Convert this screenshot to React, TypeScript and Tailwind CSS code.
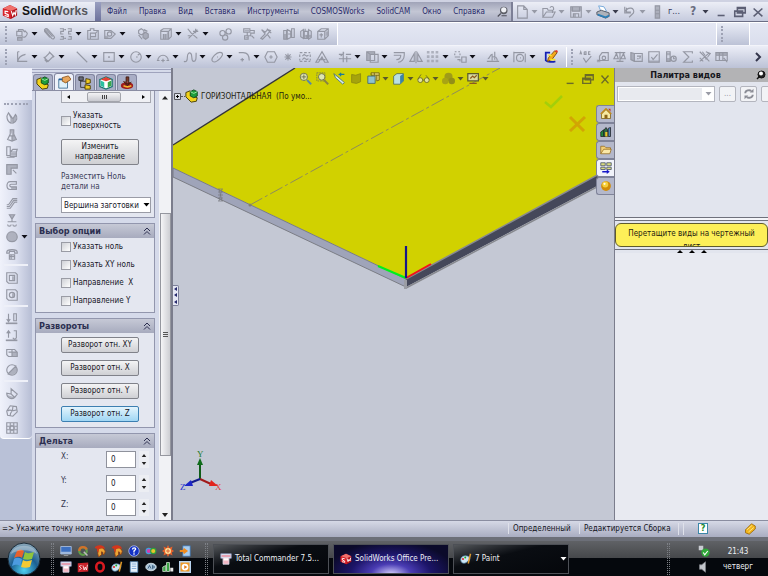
import type { ReactNode } from 'react'
import clsx from 'clsx'

type IconDef = { d: string; fill?: string; caret?: boolean; dark?: boolean }
type Tool = IconDef | 'sep'

// 16x16 line drawings: d is stroked, fill is painted
const assemblyTools: Tool[] = [
    { d: 'M2 5h6v5H2zM4 5V3h5l2 3M8 11c3 2 6-1 6-4l-3-3M3 12h5v3H3z', fill: 'M3 11h5v3H3z', caret: true },
    { d: 'M3 3l8 10c2 2 4-1 3-2L7 3C5 1 2 2 3 5l6 7M5 3l7 8' },
    { d: 'M1 2h4v3H2v3h3M1 14h4v-3H2M10 2h4v3h-3v3h3M10 14h4v-3h-3M6 3h2M6 13h2', caret: true },
    { d: 'M2 4h3V2h4v2h5v10H2zM5 7h6v4H5zM5 14v-3M11 7l2-2' },
    { d: 'M2 4h7l5 4-5 5H2zM5 8a2.5 2.5 0 105 0 2.5 2.5 0 10-5 0', fill: 'M2 10h4v3H2z', caret: true },
    'sep',
    { d: 'M3 4l3-2 3 2v3L6 9 3 7zM8 8l3-2 3 2v4l-3 2-3-2zM3 9l4 5M9 3l4 2', fill: 'M8 8l3-2 3 2v4l-3 2-3-2z' },
    'sep',
    { d: 'M2 4l3-2h9v9l-3 3H2zM2 5h9v9M11 5l3-3M5 8v6M8 8v6', fill: 'M5 8h3v6H5zM9 6h2v8H9z', caret: true },
    { d: 'M2 2l4 5 7 6M13 3L3 13M11 2v5M8 5h6M2 10h3', caret: true },
    'sep',
    { d: 'M1 7a3 3 0 106 0 3 3 0 10-6 0M8 5a3 3 0 106 0 3 3 0 10-6 0M4 12a3 3 0 106 0 3 3 0 10-6 0' },
    'sep',
    { d: 'M2 2h7v4H2zM9 4h5v3h-4v3H7v4H3v-4h3V6M11 10l3 3', fill: 'M3 3h5v2H3zM4 11h3v2H4z' },
    { d: 'M3 3l4 3 3-3 3 1-4 5-5 5-2-1 5-5zM10 9l3 4M9 2l5 5' },
    'sep',
    { d: 'M2 4h3v10H2zM6 3l4 2v7l-4 2zM11 2h3v10h-3zM7 8h3', fill: 'M2 8h3v6H2z' },
    { d: 'M2 5l3-2v10l-3-2zM6 5h4v8H6zM11 3l3 2v7l-3 2zM7 2v3M9 9v4', fill: 'M6 9h8v3H6z' },
    { d: 'M2 5l4-3h8v8l-4 4H2zM2 5h8v9M10 5l4-3M4 9h4M6 7v5', fill: 'M11 5h3v5h-3z' },
]

const sketchTools: Tool[] = [
    { d: 'M3 2v11h11M3 13c1-5 4-7 9-8M3 2h2', caret: true },
    { d: 'M3 9l6-6 4 4-6 6zM2 8l2 2M8 2l6 6M3 11l3 3', caret: true },
    'sep',
    { d: 'M2 2l12 12', caret: true },
    { d: 'M2 3h12v10H2zM7 8h2M8 7v2', caret: true },
    { d: 'M2 8a6 6 0 1012 0 6 6 0 10-12 0M8 8h2M10 6l2-2', caret: true },
    { d: 'M2 12a6 6 0 1112 0M1 12h3M12 12h3M8 10v4M6 12h4', caret: true },
    { d: 'M1 13c3 1 4-1 4-5s2-6 4-4 0 9 3 9 3-3 3-10', caret: true },
    { d: 'M3 13C0 10 8 1 13 3s-6 13-10 10M8 8h1', caret: true },
    { d: 'M2 3h5c5 0 7 3 7 9M6 9v4M4 11h4', caret: true },
    { d: 'M1 8l3-6h8l3 6-3 6H4zM6 8h4M8 6v4' },
    { d: 'M8 4v8M4 8h8M5 5l6 6M11 5l-6 6' },
    { d: 'M2 3h3M7 3h3M12 3h2M2 13h3M7 13h3M12 13h2M2 5v3M2 10v2M14 5v3M14 10v2M5 7l2-2 3 2 2-1M5 11l2-2 3 2 2-1' },
    { d: 'M1 14L8 2l7 12h-4L8 8l-4 6zM4 11h8' },
    'sep',
    { d: 'M1 5h5M9 5h6M1 10h14M6 2v12M10 7v7M3 7l4-4', caret: true },
    { d: 'M2 2h9v10H2zM6 5h9v9H6zM2 2l4 3', fill: 'M2 2h9v3H6v7H2z', caret: true },
    { d: 'M2 3h12v3c0 4-3 8-7 8M2 6h8c0 3-2 5-5 5' },
    { d: 'M8 1v14M6 4l-5 9h5zM10 4l5 9h-5z' },
    { d: '', fill: 'M1 1h3v3H1zM6 1h3v3H6zM11 1h3v3h-3zM1 6h3v3H1zM6 6h3v3H6zM11 6h3v3h-3zM1 11h3v3H1zM6 11h3v3H6zM11 11h3v3h-3z', caret: true },
    { d: 'M2 2h2M6 2h2M2 4v2M8 4v2M2 8h6M5 11h3v2M10 8h5v6h-5z', caret: true },
    'sep',
    { d: 'M1 13h14M2 10c3 0 2-5 5-5v7M10 2v9M7 8c4-1 5 0 6 4', caret: true },
    { d: 'M1 3h12M1 2v12M4 9a4 4 0 108 0 4 4 0 10-8 0M8 9h1M14 4v10', caret: true },
]

const checkTools: IconDef[] = [
    { d: 'M1 5l1-3 1 3M6 2v3h2V2H6M13 2h-2v3h2M5 9l3 5 6-7' },
    { d: 'M4 12V7l3-4h7v9H2M7 9a2 2 0 104 0 2 2 0 10-4 0', fill: 'M1 11h4v3H1z' },
    { d: 'M2 3h12M8 2v11M4 13h8M4 4l-3 6h5zM12 4l-3 6h5z' },
    { d: 'M1 3l4 1h9v9H5l-4-2zM5 4v9M8 7h4l-1 3M8 10h2', fill: 'M1 3l4 1v9l-4-2z' },
    { d: 'M2 2h12v12H2zM5 8l2 3 5-6', fill: 'M2 12h12v2H2z' },
    { d: 'M3 2h4v11H3zM8 10a3 3 0 106 0 3 3 0 10-6 0M11 8v2h2', fill: 'M3 3h4v3H3zM3 9h4v4H3z' },
    { d: 'M13 4V2H3l6 6-6 6h10v-2' },
    { d: 'M2 2l11 11M2 13L13 3M5 2l3 4M9 2l5 2-3 4M2 9l4 4', fill: 'M8 8h3v3H8z' },
    { d: 'M1 3h13v9H1zM1 6h13M5 3v9M9 3v9M10 9l4 5', fill: 'M1 3h13v3H1z' },
]

const featureTools: Tool[] = [
    { d: 'M4 2c-3 4-2 10 3 12V8zM9 14c5-2 6-7 3-10L9 9zM4 2l5 7', fill: 'M9 9l3-5c2 4 1 8-3 10z' },
    { d: 'M6 2h4v5l3 6-5 2-5-2 3-6zM5 9h6M8 9v5', fill: 'M6 2h4v5l3 6-5 2V8z' },
    { d: 'M2 2h4v10H2zM6 8h7v5H6zM6 8l3-3h5l-1 3M2 14h9', fill: 'M6 9h7v3H6z' },
    { d: 'M2 14V3h12v4H7v7zM9 9l4 4', fill: 'M2 3h12v4H7v7H2z' },
    { d: 'M13 3H6C1 3 1 12 6 12h7V9H7C5 9 5 6 7 6h6z', fill: 'M7 9h6v3H7z' },
    { d: 'M2 12h3l5-7h4M2 14h4l5-7h3M2 10h2l5-7h5' },
    { d: 'M5 2h6l-3 5zM8 7v3M3 10h10M3 13a2 2 0 104 0M9 13a2 2 0 104 0', fill: 'M5 2h6l-3 5z' },
    { d: 'M2 8c0-8 12-8 12 0 0 7-12 7-12 0', fill: 'M2 8c0-8 12-8 12 0 0 7-12 7-12 0', caret: true },
    { d: 'M2 6c0-4 12-4 12 0v1h-3V5H5v2H2zM5 9h6v5H5zM7 9v5M5 11h6' },
    'sep',
    { d: 'M2 2h10l2 2v10H4l-2-2zM5 5h6v6H5z', fill: 'M8 6h3v5H8z' },
    { d: 'M2 2h10l2 2v10H4l-2-2zM5 8a3 3 0 106 0 3 3 0 10-6 0', fill: 'M8 6h3v5H8z' },
    'sep',
    { d: 'M4 2v8M2 8l2 3 2-3M10 2h3v8h-3zM1 13h13', fill: 'M1 12h13v2H1z' },
    { d: 'M4 10V2M2 5l2-3 2 3M10 2h3v8c-1 2-3 2-4 0M1 13h13', fill: 'M1 12h13v2H1z' },
    { d: 'M2 4h9l3 3v5H4l-2-2zM4 7h10M8 4v8', fill: 'M8 7h6v5H8z' },
    { d: 'M2 8a6 6 0 1012 0 6 6 0 10-12 0M3 13L13 3', fill: 'M3 12L12 3c6 6-4 14-9 9z' },
    'sep',
    { d: 'M7 2v6L2 7c0 5 5 8 9 5l3-4zM7 8l4 4', fill: 'M3 9l8 3c-4 2-7 1-8-3z' },
    { d: 'M2 8l4-6 7 1 1 6-5 5-6-1zM3 8c3-3 6 2 11-2M6 13c0-5 3-2 3-10' },
    { d: 'M2 2h12v12H2zM2 6h12M2 10h12M6 2v12M10 2v12M8 5l3 3-3 3-3-3z' },
]

function Glyph({ icon, className = 'size-3.5' }: { icon: IconDef; className?: string }) {
    return (
        <svg viewBox="0 0 16 16" className={clsx(className, 'shrink-0', icon.dark ? 'text-[#5c5f74]' : 'text-[#9497a3]')} aria-hidden="true">
            {icon.fill && <path d={icon.fill} fill="currentColor" opacity=".65" />}
            <path d={icon.d} fill="none" stroke="currentColor" strokeWidth={icon.dark ? 1.8 : 1.3} />
        </svg>
    )
}

function Caret({ className = 'text-[#101018]' }: { className?: string }) {
    return (
        <svg viewBox="0 0 10 6" className={clsx('h-1.5 w-2.5 shrink-0', className)} aria-hidden="true">
            <path d="M2.500 1h6L5.500 4.500z" fill="currentColor" />
        </svg>
    )
}

function ToolRow({ tools }: { tools: Tool[] }) {
    return (
        <div className="flex items-center">
            {tools.map((t, i) =>
                t === 'sep' ? (
                    <span key={i} className="w-1.5" />
                ) : (
                    <button key={i} className="mr-[3px] flex items-center">
                        <Glyph icon={t} />
                        {t.caret && <Caret />}
                    </button>
                ),
            )}
        </div>
    )
}

function Grip() {
    return <span className="h-4 border-l-2 border-dotted border-[#9ea2b4]" />
}

function SwCube({ className }: { className: string }) {
    return (
        <svg viewBox="0 0 18 18" className={className} aria-hidden="true">
            <path d="M1 5l8-4 8 4v8l-7 4-9-4z" fill="#b3121b" />
            <path d="M1 5l8-4 8 4-7 3z" fill="#f0706c" />
            <path d="M1 5l9 3v9l-9-4z" fill="#d9232b" />
            <path d="M7 8.500L3.500 8v2.500L7 12v2l-4-1M10.500 8l1.500 5 1.500-3.500L15 12l1-5" fill="none" stroke="#fff" strokeWidth="1.300" />
        </svg>
    )
}

const menus = ['Файл', 'Правка', 'Вид', 'Вставка', 'Инструменты', 'COSMOSWorks', 'SolidCAM', 'Окно', 'Справка']

function TitleBar() {
    return (
        <header className="flex h-[22px] shrink-0 items-stretch border-t-2 border-b border-t-[#cfd2e2] border-b-[#6b6e85] bg-linear-to-b from-[#eceef6] to-[#c6cbde]">
            <div className="flex w-[95px] items-center gap-1 pl-0.5">
                <SwCube className="size-4" />
                <span className="font-[Liberation_Sans,sans-serif] text-[12px] font-bold text-[#141414]">
                    Solid<span className="text-[#55565c]">Works</span>
                </span>
            </div>
            <span className="w-1.5 bg-linear-to-b from-[#9a9fc0] to-[#6d729c]" />
            <nav className="flex flex-1 items-center justify-between bg-linear-to-b from-[#a0a4b8] via-[#c3c6d4] to-[#a9adc1] pr-0.5 pl-1.5 text-[#28296a]">
                {menus.map(m => (
                    <button key={m} className="whitespace-nowrap">{m}</button>
                ))}
                <svg viewBox="0 0 16 16" className="size-3" aria-hidden="true">
                    <circle cx="9" cy="6" r="5" fill="#5c5e66" />
                    <circle cx="9" cy="5" r="3.500" fill="#eef0f4" />
                    <path d="M5 10l-4 4M6 13h7" stroke="#4c4d58" strokeWidth="1.500" />
                </svg>
            </nav>
            <div className="flex w-[257px] items-center border-l-2 border-[#7c7f96] pl-0.5">
                {[
                    { d: 'M3 1h7l4 4v10H3zM10 1v4h4' },
                    { d: 'M1 14V4h5l1 2h5v3M1 14l4-6h10l-3 6zM9 3c3-3 5 0 4 3' },
                    { d: 'M2 2h12v12H2zM4 2v5h8V2M5 14v-4h6v4', fill: 'M2 2h12v5H2zM5 10h3v4H5z' },
                ].map((t, i) => (
                    <button key={i} className="mr-[3px] flex items-center">
                        <Glyph icon={t} />
                        <Caret className="text-[#9699a6]" />
                    </button>
                ))}
                <button className="mr-[3px] flex items-center">
                    <svg viewBox="0 0 16 16" className="size-3.5" aria-hidden="true">
                        <path d="M3 1l6 1 3 5-6 1z" fill="#fff" stroke="#6aa2d8" />
                        <path d="M1 8l5-2 9 3v4l-4 2-10-4z" fill="#aeb2ba" stroke="#50535e" />
                        <path d="M2 11l9 3 4-2" fill="none" stroke="#2c7fb8" strokeWidth="2" />
                    </svg>
                    <Caret className="text-[#3a3c4c]" />
                </button>
                <button className="mr-[3px] flex items-center">
                    <Glyph icon={{ d: 'M2 2v7h7M2 8c4-7 12-5 10 1l-5 5M4 3v5h5' }} />
                    <Caret className="text-[#9699a6]" />
                </button>
                <button className="mr-1">
                    <Glyph icon={{ d: 'M6 1h5v14H6zM6 6h5M6 10h5', fill: 'M6 1h5v14H6z' }} />
                </button>
                <span className="text-[9px] text-[#33355e]">г...</span>
                <button className="ml-2.5 flex items-center gap-1 text-[12px] font-bold text-[#6a6d80]">
                    ?<Caret className="text-[#3a3c4c]" />
                </button>
                <div className="ml-auto flex gap-1 pr-[3px]">
                    {['M3 12h8', 'M5 3h9v6H5zM2 7h9v6H2zM5 4h9', 'M3 4l10 9M13 4L3 13'].map(d => (
                        <button key={d}><Glyph icon={{ d, dark: true }} /></button>
                    ))}
                </div>
            </div>
        </header>
    )
}

function Toolbars() {
    return (
        <>
            <div className="flex h-6 shrink-0 items-stretch border-t border-b border-t-white border-b-[#f3f4fa] bg-linear-to-b from-[#e4e7f3] to-[#dadeed]">
                <div className="flex w-[338px] items-center gap-2 border-r border-white bg-linear-to-b from-[#e9ecf6] to-[#bcc2d6] pl-[5px]">
                    <Grip />
                    <ToolRow tools={assemblyTools} />
                </div>
                <div className="flex-1" />
                <div className="flex w-[34px] items-center border-x border-white bg-linear-to-b from-[#e9ecf6] to-[#bcc2d6] pl-1">
                    <Grip />
                </div>
                <div className="w-[18px]" />
            </div>
            <div className="flex h-[22px] shrink-0 items-center bg-linear-to-b from-[#eceef7] to-[#bcc2d6] pl-[5px]">
                <Grip />
                <div className="w-2" />
                <ToolRow tools={sketchTools} />
                <button className="mx-1">
                    <svg viewBox="0 0 16 16" className="size-3.5" aria-hidden="true">
                        <path d="M7 3H2v9c2 2 8 2 11 1" fill="none" stroke="#1420b4" strokeWidth="2" />
                        <path d="M5 9l7-8 3 2-6 8-5 2z" fill="#f4a81c" stroke="#7c4a08" />
                        <path d="M12 1l3 2 1-2-2-1z" fill="#e43d2a" />
                        <path d="M5 6h4M7 11h6" stroke="#f5e12e" strokeWidth="2" />
                    </svg>
                </button>
                <span className="mr-1 ml-1 h-5 border-l border-white" />
                <Grip />
                <div className="w-1.5" />
                <ToolRow tools={checkTools} />
                <svg viewBox="0 0 8 10" className="mr-1.5 ml-auto h-2.5 w-2" aria-hidden="true">
                    <path d="M2 1l4 4-4 4" fill="none" stroke="#34364c" strokeWidth="2" />
                </svg>
            </div>
        </>
    )
}

function FeatureBar() {
    return (
        <div className="flex w-8 shrink-0 flex-col bg-[#b9c1d7]">
            <div className="h-8 shrink-0 bg-[#eef0fa]" />
            <div className="rounded-b-sm border-b border-white bg-linear-to-r from-[#f0f2fb] via-[#dce0ef] to-[#b6bdd4] pt-[3px]">
                <div className="mx-1 mb-1.5 border-t-2 border-dotted border-[#9ea2b4]" />
                {featureTools.map((t, i) =>
                    t === 'sep' ? (
                        <div key={i} className="mx-1 mb-[5px] border-t-2 border-[#eef0f8]" />
                    ) : (
                        <button key={i} className="mb-[3px] flex h-3.5 items-center pl-[5px]">
                            <Glyph icon={t} />
                            {t.caret && <Caret />}
                        </button>
                    ),
                )}
            </div>
        </div>
    )
}

const tabIcons: ReactNode[] = [
    <>
        <path d="M1 4l5-2 2 6 6 2-1 4-6 1-6-6z" fill="#f2d21c" stroke="#3d3500" />
        <path d="M6 3l4-2 4 2v5l-4 2-4-2z" fill="#1f9d3c" stroke="#0b4518" />
        <path d="M6 3l4 2 4-2" fill="none" stroke="#a7ecae" />
    </>,
    <>
        <path d="M2 5h10v10H2z" fill="#dff1fb" stroke="#3f6e93" />
        <path d="M6 3l7-2 3 4-6 4-4-2z" fill="#e7a55c" stroke="#8f5518" />
        <path d="M2 5h4" stroke="#2060a0" strokeWidth="2" />
    </>,
    <>
        <path d="M3 3v10h6M3 6h6" fill="none" stroke="#333" />
        <path d="M1 1h5v4H1z" fill="#6a6d7c" stroke="#2b2b2b" />
        <path d="M9 3l5 1v4l-5 1zM8 10l6 1v4H8z" fill="#f0cb22" stroke="#4b3b00" />
    </>,
    <>
        <path d="M1 4l7-3 7 3v8l-7 3-7-3z" fill="#fff" stroke="#19746f" strokeWidth="1.500" />
        <path d="M2 4l6-3 6 3-6 2z" fill="#e44133" />
        <path d="M2 5l4 2v6l-4-2z" fill="#2bbf9f" />
        <path d="M10 7l4-2v6l-4 2z" fill="#3aa84a" />
    </>,
    <>
        <path d="M1 11c0-5 14-5 14 0s-14 5-14 0" fill="#a01d1d" />
        <path d="M7 1h3v8H7zM4 6l4 5 5-4" fill="#7a3a28" stroke="#3e1a10" />
        <path d="M4 11c3 2 6 2 9 0" fill="none" stroke="#f2b632" strokeWidth="2" />
    </>,
]

function Group({ title, children }: { title: string; children: ReactNode }) {
    return (
        <section className="mb-[5px] border border-[#9296ad] bg-[#e4e7f0]">
            <h2 className="flex h-[14px] items-center justify-between bg-linear-to-b from-[#c6c9d6] to-[#a7abbe] px-[3px] text-[9px] leading-none font-bold text-[#2c2f50]">
                {title}
                <svg viewBox="0 0 8 8" className="size-2" aria-hidden="true">
                    <path d="M1 4l3-3 3 3M1 7.500l3-3 3 3" fill="none" stroke="#2c2f50" />
                </svg>
            </h2>
            {children}
        </section>
    )
}

function Check({ label, className }: { label: string; className?: string }) {
    return (
        <label className={clsx('flex items-center gap-0.5 leading-[10px]', className)}>
            <input type="checkbox" className="size-2.5 shrink-0 appearance-none border border-[#9a9ca5] bg-linear-to-br from-[#cfd1d6] to-white" />
            <span>{label}</span>
        </label>
    )
}

function PanelButton({ children, active, tall }: { children: ReactNode; active?: boolean; tall?: boolean }) {
    return (
        <button
            className={clsx(
                'block w-[78px] rounded-[2px] border leading-[10px]',
                tall ? 'h-[26px]' : 'h-4',
                active
                    ? 'border-[#3c7fb1] bg-linear-to-b from-[#e3f4fd] to-[#9fd6f4]'
                    : 'border-[#80828a] bg-linear-to-b from-[#f4f4f5] to-[#cfd0d4]',
            )}
        >
            {children}
        </button>
    )
}

function PropertyPanel() {
    return (
        <aside className="flex w-[141px] shrink-0 flex-col border-r-2 border-[#7b7d8c] bg-[#d5daea]">
            <div className="mt-px h-1 shrink-0 border-y border-[#9fa3bd]" />
            <div className="flex h-[18px] shrink-0 items-end gap-px border-b border-[#8a8da3] pl-px">
                {tabIcons.map((icon, i) => (
                    <button
                        key={i}
                        className={clsx(
                            'flex w-5 items-center justify-center rounded-t-[3px] border border-b-0 border-[#8286a0]',
                            i === 1 ? 'h-[17px] bg-[#eef1f9]' : 'h-4 bg-[#a9aec6]',
                        )}
                    >
                        <svg viewBox="0 0 16 16" className="size-3.5" aria-hidden="true">{icon}</svg>
                    </button>
                ))}
            </div>
            <div className="flex min-h-0 flex-1">
                <div className="min-w-0 flex-1 overflow-hidden pr-1 pl-[3px] text-[#15151f]">
                    <section className="mb-[5px] h-[127px] border border-t-0 border-[#9296ad] bg-[#e4e7f0] pr-[3px] pl-[25px]">
                        <div className="flex h-3 items-center justify-between border border-t-0 border-[#a5a7b0] bg-[#eff0f4] px-1">
                            <svg viewBox="0 0 6 6" className="size-1.5"><path d="M4 1v4L1 3z" /></svg>
                            <span className="-ml-1 flex h-2.5 w-[34px] items-center justify-center gap-px rounded-[2px] border border-[#a3a5ac] bg-linear-to-b from-[#f3f3f5] to-[#c9cad0]">
                                <i className="h-1 w-px bg-[#444]" />
                                <i className="h-1 w-px bg-[#444]" />
                                <i className="h-1 w-px bg-[#444]" />
                            </span>
                            <svg viewBox="0 0 6 6" className="size-1.5"><path d="M2 1v4l3-2z" /></svg>
                        </div>
                        <Check label="Указать поверхность" className="mt-2 w-16" />
                        <div className="mt-2">
                            <PanelButton tall>Изменить направление</PanelButton>
                        </div>
                        <label htmlFor="zero-at" className="mt-[7px] block w-[72px] leading-[10px] text-[#3a3d58]">Разместить Ноль детали на</label>
                        <div className="relative mt-[5px]">
                            <select id="zero-at" className="h-4 w-full appearance-none border border-[#9a9ca6] bg-white pl-0.5">
                                <option>Вершина заготовки</option>
                            </select>
                            <Caret className="pointer-events-none absolute top-[5px] right-0 text-black" />
                        </div>
                    </section>
                    <Group title="Выбор опции">
                        <div className="flex h-[74px] flex-col gap-2 pt-1 pl-[25px]">
                            <Check label="Указать ноль" />
                            <Check label="Указать XY ноль" />
                            <Check label="Направление  X" className="whitespace-pre" />
                            <Check label="Направление Y" />
                        </div>
                    </Group>
                    <Group title="Развороты">
                        <div className="flex h-[94px] flex-col gap-[7px] pt-1 pl-[25px]">
                            <PanelButton>Разворот отн. XY</PanelButton>
                            <PanelButton>Разворот отн. X</PanelButton>
                            <PanelButton>Разворот отн. Y</PanelButton>
                            <PanelButton active>Разворот отн. Z</PanelButton>
                        </div>
                    </Group>
                    <Group title="Дельта">
                        <div className="flex flex-col gap-[7px] pt-[3px] pb-3 pl-[25px]">
                            {['X', 'Y', 'Z'].map(axis => (
                                <div key={axis} className="flex items-start">
                                    <label htmlFor={`delta-${axis}`} className="w-[45px] text-[#33364e]">{axis}:</label>
                                    <input id={`delta-${axis}`} defaultValue="0" className="h-[17px] w-[30px] border border-[#8f929c] bg-white px-1" />
                                    <div className="ml-[3px] flex h-[17px] w-2.5 flex-col justify-between bg-[#eceef3] py-[3px]">
                                        <svg viewBox="0 0 6 4" className="mx-auto h-[3px] w-1.5"><path d="M0 4l3-4 3 4z" fill="#222" /></svg>
                                        <svg viewBox="0 0 6 4" className="mx-auto h-[3px] w-1.5"><path d="M0 0l3 4 3-4z" fill="#222" /></svg>
                                    </div>
                                </div>
                            ))}
                        </div>
                    </Group>
                </div>
                <div className="flex w-3 flex-col items-center bg-[#f1f2f5]">
                    <svg viewBox="0 0 6 6" className="mt-1 size-1.5"><path d="M0 4.500L3 1l3 3.500z" fill="#222" /></svg>
                    <div className="mt-28 flex h-[243px] w-[11px] flex-col items-center justify-center gap-px border border-[#95979f] bg-linear-to-r from-[#f5f5f7] to-[#cdced3]">
                        <i className="h-px w-[5px] bg-[#555]" />
                        <i className="h-px w-[5px] bg-[#555]" />
                        <i className="h-px w-[5px] bg-[#555]" />
                    </div>
                    <svg viewBox="0 0 6 6" className="mt-auto mb-0.5 size-1.5"><path d="M0 1l3 4 3-4z" fill="#222" /></svg>
                </div>
            </div>
        </aside>
    )
}

const viewTools: { art: ReactNode; caret?: boolean }[] = [
    { art: <><circle cx="6" cy="6" r="4.500" fill="#dfe6b0" stroke="#60624a" /><path d="M6 3v6M3 6h6" stroke="#60624a" /><path d="M10 10l5 5" stroke="#5687a8" strokeWidth="2.500" /></> },
    { art: <><path d="M1 1h10v10H1z" fill="none" stroke="#777a50" strokeDasharray="2 1" /><circle cx="7" cy="6" r="4" fill="#dfe6b0" stroke="#60624a" /><path d="M10 10l5 5" stroke="#8a8440" strokeWidth="2.500" /></> },
    { art: <><path d="M1 2l5 4 8 7-2 2-9-8z" fill="#d9ecec" stroke="#456e76" /><path d="M14 3H8l2-2M8 3l2 2" fill="none" stroke="#1b7a9c" strokeWidth="1.500" /></> },
    { art: <path d="M2 3l5 1 6-2v10l-5 2-6-1z" fill="#a5a30c" stroke="#8a8810" /> },
    { art: <><path d="M5 1h10v9l-3 1M5 1v3M9 1v3M5 4h10M12 4v7" fill="#e6d66c" stroke="#6b5a10" /><path d="M1 5h9v9H1z" fill="#8fc3cf" stroke="#3e6470" /></>, caret: true },
    { art: <><path d="M2 5l4-3h8v9l-4 4H2z" fill="#b9dfe2" stroke="#4d6b5a" /><path d="M10 5l4-3v9l-4 4z" fill="#3b84a8" /></>, caret: true },
    { art: <><circle cx="4" cy="10" r="3" fill="#e4e49a" stroke="#66662a" /><circle cx="12" cy="10" r="3" fill="#e4e49a" stroke="#66662a" /><path d="M1 9l4-6M15 9l-4-5M7 10h2" stroke="#66662a" /></>, caret: true },
    { art: <><circle cx="8" cy="6" r="5" fill="#9f9b18" /><circle cx="4" cy="11" r="4" fill="#a8a414" /><circle cx="12" cy="11" r="4" fill="#938f18" /></>, caret: true },
    { art: <><path d="M1 2h13v9H1z" fill="#d9dba0" stroke="#5c5c2a" strokeWidth="1.500" /><path d="M4 8l3-3 2 2 3-3M3 14h9" stroke="#8c5a1c" strokeWidth="1.500" fill="none" /></>, caret: true },
]

const paneTabs: ReactNode[] = [
    <><path d="M2 8l6-6 6 6v6H2z" fill="#f7e9a0" stroke="#7a5a10" /><path d="M1 8l7-7 7 7" fill="none" stroke="#c08a1a" strokeWidth="2" /><path d="M6 9h4v5H6z" fill="#8a6418" /><path d="M11 1h3v4z" fill="#c2331c" /></>,
    <><path d="M1 8l4-3v9H1z" fill="#1f8a3c" stroke="#1d1d22" /><path d="M5 6l3-4 2 3v9H5z" fill="#2f6a4a" stroke="#1d1d22" /><path d="M7 8h3v6H7z" fill="#e8c52a" /><path d="M11 3l3-1v12h-3z" fill="#4a86b8" stroke="#1d1d22" /></>,
    <><path d="M1 13V3h5l2 2h6v3" fill="#f4d078" stroke="#946a1c" /><path d="M1 13l4-6h10l-2 6z" fill="#fbe8a8" stroke="#946a1c" /></>,
    <><path d="M1 1h6v4H1zM9 1h6v4H9zM1 7h6v3H1zM9 7h6v3H9z" fill="#d9dd7e" stroke="#3d4866" /><path d="M3 13h7" stroke="#1516c8" strokeWidth="2" /><path d="M9 10l4 3-4 3z" fill="#1516c8" /></>,
    <><circle cx="8" cy="8" r="6.500" fill="#d28d09" /><circle cx="7" cy="6" r="4" fill="#f6cf3a" /><circle cx="6" cy="5" r="1.500" fill="#fffbe0" /></>,
]

function ModelView() {
    return (
        <main className="relative min-w-0 flex-1 overflow-hidden border-r border-[#7b7d8c] bg-[#c4c8d4]">
            <svg viewBox="0 0 441 452" preserveAspectRatio="xMinYMin slice" className="absolute inset-0 size-full">
                <path d="M0 77L122 0h319v98L233 211 0 100z" fill="#d1d100" />
                <path d="M0 77L122 0" stroke="#33343a" strokeWidth="1.300" />
                <path d="M0 100l233 111v8L0 109z" fill="#9fa4b9" stroke="#7b7d85" />
                <path d="M233 211L441 98v11L233 219z" fill="#45485a" />
                <path d="M233 211L441 98M233 220L441 110" stroke="#87898f" strokeWidth="1.500" />
                <path d="M77 137L327 0" stroke="#8e8c5c" strokeDasharray="14 3 3 3" />
                <circle cx="77" cy="137" r="1.500" fill="#808070" />
                <path d="M45 121h5M45 124h5M45 127h5M45 130h5M45 133h5M46 121l3 12M49 121l-3 12" stroke="#75777d" strokeWidth=".7" />
                <path d="M205 198l28 12" stroke="#00ef1c" strokeWidth="2" />
                <path d="M233 210l25-14" stroke="#f3101c" strokeWidth="2" />
                <path d="M233 178v32" stroke="#15158a" strokeWidth="2.200" />
                <path d="M232.500 212v9" stroke="#9b9da4" strokeWidth="3" />
                {/* axis triad */}
                <path d="M27 411V394" stroke="#0f5c18" strokeWidth="2" />
                <path d="M24 397l3-7 3 7z" fill="#0f6c1a" />
                <path d="M27 411l11 5" stroke="#a11a1a" strokeWidth="2" />
                <path d="M38 412l7 6-9 0z" fill="#e2231c" />
                <path d="M27 411l-10 4" stroke="#141c8c" strokeWidth="2" />
                <path d="M18 412l-7 6 9 0z" fill="#1c25c8" />
                <g fontFamily="Liberation Serif, serif" fontSize="9">
                    <text x="24" y="389" fill="#1f7a2a">Y</text>
                    <text x="42" y="422" fill="#e23a34">X</text>
                    <text x="7" y="422" fill="#2730cf">Z</text>
                </g>
            </svg>

            <div className="absolute top-[21px] left-px flex items-center text-[#1e1e10]">
                <svg viewBox="0 0 7 7" className="size-[7px]" aria-hidden="true">
                    <path d="M.5.5h6v6h-6z" fill="#dde0e8" stroke="#55565c" />
                    <path d="M2 3.500h3M3.500 2v3" stroke="#000" />
                </svg>
                <span className="w-1 border-t border-dotted border-[#55565c]" />
                <svg viewBox="0 0 16 16" className="size-3.5" aria-hidden="true">{tabIcons[0]}</svg>
                <span className="ml-0.5 whitespace-pre">ГОРИЗОНТАЛЬНАЯ  (По умо...</span>
            </div>

            <div className="absolute top-1 left-[126px] flex items-center">
                {viewTools.map((t, i) => (
                    <button key={i} className={clsx('flex items-center', t.caret ? 'mr-0.5' : 'mr-1')}>
                        <svg viewBox="0 0 16 16" className="size-[13px]" aria-hidden="true">{t.art}</svg>
                        {t.caret && <Caret className="text-[#5a5a28]" />}
                    </button>
                ))}
            </div>

            <div className="absolute top-1 right-0.5 flex gap-[3px]">
                {['M3 13h8', 'M5 3h9v6H5zM2 7h9v6H2zM5 4h9M2 8h9', 'M4 4l8 9M12 4l-8 9'].map(d => (
                    <button key={d}>
                        <svg viewBox="0 0 16 16" className="size-3.5" aria-hidden="true">
                            <path d={d} fill="none" stroke="#6b6b28" strokeWidth="1.600" />
                        </svg>
                    </button>
                ))}
            </div>

            <svg viewBox="0 0 44 40" className="absolute top-6 right-[26px] h-10 w-11" aria-hidden="true">
                <path d="M1 10l6 5L18 4" fill="none" stroke="#a3cf0a" strokeWidth="2.500" />
                <path d="M26 25l14 14M41 25L26 39" stroke="#d2a504" strokeWidth="3" />
            </svg>

            <div className="absolute top-[37px] right-0 flex flex-col">
                {paneTabs.map((icon, i) => (
                    <button
                        key={i}
                        className={clsx(
                            'flex h-[18px] w-[18px] items-center justify-center rounded-l-[3px] border border-r-0 border-[#7f8399]',
                            i === 3 ? 'bg-[#f1f3fa]' : 'bg-[#b4b8cb]',
                        )}
                    >
                        <svg viewBox="0 0 16 16" className="size-3" aria-hidden="true">{icon}</svg>
                    </button>
                ))}
            </div>

            <button className="absolute top-[217px] left-0 flex h-[21px] w-1.5 flex-col items-center justify-around rounded-r-[2px] border border-l-0 border-[#7d809a] bg-[#e6e8f4]">
                {[0, 1, 2].map(i => (
                    <svg key={i} viewBox="0 0 4 4" className="size-1"><path d="M3 0v4L0 2z" fill="#25286c" /></svg>
                ))}
            </button>
        </main>
    )
}

function ViewPalette() {
    return (
        <aside className="flex w-[153px] shrink-0 flex-col overflow-hidden bg-[#e2e5ee]">
            <h2 className="flex h-[14px] items-center bg-[#b3b3b5] pr-0.5 text-[9px] leading-none font-bold text-[#16161c]">
                <span className="flex-1 text-center whitespace-nowrap">Палитра видов</span>
                <svg viewBox="0 0 10 10" className="size-2.5" aria-hidden="true">
                    <circle cx="5.500" cy="4.500" r="3.500" fill="#222" stroke="#111" />
                    <circle cx="5" cy="3.500" r="2" fill="#fff" />
                    <path d="M1 9l3-3" stroke="#111" strokeWidth="1.500" />
                </svg>
            </h2>
            <div className="mt-1 ml-0.5 flex gap-1">
                <div className="relative shrink-0">
                    <select aria-label="Палитра видов" disabled className="block h-4 w-[98px] appearance-none border border-[#b3b5be] bg-[#e8eaef] outline-1 -outline-offset-2 outline-white" />
                    <span className="pointer-events-none absolute inset-y-px right-px flex w-3 items-center justify-center bg-white">
                        <Caret className="text-[#9a9ca6]" />
                    </span>
                </div>
                <button className="h-4 w-[17px] shrink-0 rounded-[2px] border border-[#b3b5be] bg-[#f2f3f6] leading-none text-[#9a9ca6]">...</button>
                <button className="flex h-4 w-[17px] shrink-0 items-center justify-center rounded-[2px] border border-[#b3b5be] bg-[#f2f3f6]">
                    <svg viewBox="0 0 16 16" className="size-3" aria-hidden="true">
                        <path d="M3 7c0-4 6-5 8-3M13 9c0 4-6 5-8 3" fill="none" stroke="#8b8d96" strokeWidth="2.500" />
                        <path d="M9 6h5V1zM7 10H2v5z" fill="#8b8d96" />
                    </svg>
                </button>
                <button aria-label="Обзор" className="h-4 w-[17px] shrink-0 rounded-[2px] border border-[#b3b5be] bg-[#f2f3f6]" />
            </div>
            <div className="mt-[115px] h-1 shrink-0 border-y border-[#6f717c] bg-[#f4f5f9]" />
            <p className="mt-0.5 h-6 shrink-0 overflow-hidden rounded-md border border-[#5e5a2c] bg-[#fdef58] px-3 pt-[3px] text-center leading-[13px] text-[#1d1a10]">
                Перетащите виды на чертежный лист
            </p>
            <div className="mt-0.5 flex h-1 shrink-0 items-center justify-center gap-1 border-t border-[#6f717c]">
                {[0, 1, 2].map(i => (
                    <svg key={i} viewBox="0 0 8 3" className="h-[3px] w-2"><path d="M1 3l3-3 3 3z" /></svg>
                ))}
            </div>
            <div className="flex-1 bg-[#e8eaf1]" />
        </aside>
    )
}

function StatusBar() {
    return (
        <footer className="flex h-[17px] shrink-0 items-center border-t border-[#8a8da0] bg-linear-to-b from-[#d6d9e6] to-[#a9adc1] pr-3 pb-px pl-0.5 text-[#14141c]">
            <span className="flex-1">=&gt; Укажите точку ноля детали</span>
            <span className="w-[71px] border-l border-[#dfe1ea] pl-1">Определенный</span>
            <span className="w-[99px] border-l border-[#dfe1ea] pl-1">Редактируется Сборка</span>
            <span className="mr-3.5 h-3 w-1.5 border-x border-[#dfe1ea]" />
            <button className="flex h-[11px] w-2.5 items-center justify-center border border-[#3c87a8] bg-white text-[9px] leading-none font-bold text-[#1c8a2c]">?</button>
            <svg viewBox="0 0 16 16" className="ml-9 size-3" aria-hidden="true">
                <path d="M2 9l8-8 5 3v4l-8 7-5-2z" fill="#f2b51a" stroke="#946004" />
                <path d="M4 9l7-6M6 12l7-6" stroke="#fff0a8" />
            </svg>
        </footer>
    )
}

const commander = <><path d="M1 1h14v6H1z" fill="#e8edf8" stroke="#8892b8" /><path d="M4 6h8v9H4z" fill="#f3b8c4" stroke="#d8dcec" /><path d="M2 4h12" stroke="#e0647c" strokeWidth="1.500" /><path d="M5 7h6v3H5z" fill="#fff" /></>
const paint = <><path d="M1 9c0-6 10-7 12-2 1 4-3 3-4 5s-8 3-8-3" fill="#cfe6f4" stroke="#5b93b8" /><circle cx="4" cy="8" r="1.300" fill="#d22" /><circle cx="7" cy="6" r="1.300" fill="#2a2" /><path d="M14 1l-3 13" stroke="#e09a2c" strokeWidth="2" /></>
const spartan = <><path d="M6 4h6l3 4-1 4-2 1v-3l-2-1v4l-4 3-1-5z" fill="#eda536" stroke="#8c3a0c" /><path d="M1 4c1-4 8-5 12-2l2 3-5-1-4 2v4L4 8V5z" fill="#d3361c" /></>

const quickLaunch: ReactNode[] = [
    <><path d="M1 2h14v10H1z" fill="#3c6fc0" stroke="#b8cbe8" /><path d="M1 9h14v3H1z" fill="#9fb8dc" /><path d="M5 14h6" stroke="#aaa" /></>,
    <><circle cx="8" cy="8" r="5" fill="none" stroke="#5f9e4a" strokeWidth="3" /><path d="M3 8c0-6 8-7 10-2" fill="none" stroke="#d2702a" strokeWidth="3" /><path d="M9 9l5 5" stroke="#bbb" strokeWidth="2" /></>,
    spartan,
    spartan,
    <><circle cx="8" cy="8" r="7" fill="#1432c4" stroke="#b8c4f4" /><path d="M6 6c0-3 5-3 4 0l-2 2v2M8 11v2" fill="none" stroke="#fff" strokeWidth="1.800" /></>,
    <><circle cx="5" cy="8" r="3.500" fill="#d23cb0" stroke="#3fa0e0" strokeWidth="1.500" /><circle cx="11" cy="8" r="3.500" fill="#e8c42c" stroke="#2fa03c" strokeWidth="1.500" /></>,
    <><path d="M8 0l2 4 4-2-1 4 3 2-3 2 1 4-4-2-2 4-2-4-4 2 1-4-3-2 3-2-1-4 4 2z" fill="#e8612a" /><circle cx="8" cy="8" r="4" fill="#ffe9a0" /><path d="M5 8h6M8 5v6" stroke="#d2401c" /></>,
    <><path d="M5 1h10v14H5z" fill="#a8cdf0" stroke="#386ea8" /><path d="M1 8h8M6 5l4 3-4 3" fill="none" stroke="#f08a1c" strokeWidth="2.500" /></>,
    commander,
    <><path d="M1 3l14-1v12l-14 1z" fill="#c8222a" /><path d="M6 6L3 7l3 3-3 2M8 6l1.500 6L11 8l1.500 4L14 5" fill="none" stroke="#fff" /></>,
    <ellipse cx="8" cy="8" rx="5" ry="6" fill="none" stroke="#d81a20" strokeWidth="3.500" />,
    paint,
    <><path d="M3 1h10v14H3z" fill="#e6f1fb" stroke="#5b90c4" /><path d="M5 4h6M5 7h6M5 10h6" stroke="#6a9ad0" /></>,
    <><ellipse cx="8" cy="8" rx="7" ry="5" fill="#a9c4d8" stroke="#e8f1f6" /><path d="M4 10l2-4 2 4M10 6v4l3-2z" stroke="#23486c" fill="none" /></>,
    <><path d="M1 8l4-2v8H1zM6 2h4v12H6z" fill="#3aa244" stroke="#d8e6d8" /><path d="M11 9h4v5h-4z" fill="#e8e8e8" /></>,
    <><path d="M1 1h14v14H1z" fill="#f09a28" stroke="#b8d4f0" strokeWidth="2" /><circle cx="8" cy="8" r="4.500" fill="#fff" /><path d="M7 5.500v5l4-2.500z" fill="#e0781a" /></>,
]

const tasks: { name: string; icon: ReactNode; active?: boolean; more?: boolean }[] = [
    { name: 'Total Commander 7.5...', icon: <svg viewBox="0 0 16 16" className="size-3 shrink-0">{commander}</svg> },
    { name: 'SolidWorks Office Pre...', icon: <SwCube className="size-3 shrink-0" />, active: true },
    { name: '7 Paint', icon: <svg viewBox="0 0 16 16" className="size-3 shrink-0">{paint}</svg>, more: true },
]

function Taskbar() {
    return (
        <div className="flex h-[39px] shrink-0 items-center border-t-4 border-[#6c6f78] bg-linear-to-b from-[#606266] from-0% via-[#45474a] via-50% to-[#05080d] to-50% text-[#eef0f4]">
            <button aria-label="Пуск" className="ml-[7px] size-[34px]">
                <svg viewBox="0 0 34 34" className="size-full">
                    <defs>
                        <radialGradient id="orb" cx=".5" cy=".85" r=".85">
                            <stop offset="0" stopColor="#4fd0f0" />
                            <stop offset=".5" stopColor="#1b5f92" />
                            <stop offset="1" stopColor="#8ea9ba" />
                        </radialGradient>
                    </defs>
                    <circle cx="17" cy="17" r="16" fill="url(#orb)" stroke="#1c2b38" />
                    <path d="M10 9c3-2 5-1 7 0l-2 7c-3-2-5-1-8 0z" fill="#e8612c" />
                    <path d="M18 10c3 2 6 1 9 0l-2 7c-3 1-6 1-9 0z" fill="#8fc43c" />
                    <path d="M7 17c3-2 5-1 8 0l-2 7c-3-2-5-1-8 0z" fill="#4c9be0" />
                    <path d="M16 18c3 2 6 1 9 0l-2 7c-3 1-6 1-9 0z" fill="#f6c932" />
                    <path d="M4 12C6 1 28 1 30 12c-8-5-18-5-26 0z" fill="#fff" opacity=".3" />
                </svg>
            </button>
            <div className="mr-1.5 ml-2.5 flex h-8 w-[3px] border-x border-dotted border-[#7d8086]" />
            <div className="grid grid-cols-8 gap-x-[5px] gap-y-1">
                {quickLaunch.map((art, i) => (
                    <button key={i} className="size-3">
                        <svg viewBox="0 0 16 16" className="size-full" aria-hidden="true">{art}</svg>
                    </button>
                ))}
            </div>
            <div className="mr-[5px] ml-3.5 h-8 w-[3px] border-x border-dotted border-[#7d8086]" />
            <div className="flex gap-1">
                {tasks.map(t => (
                    <button
                        key={t.name}
                        className={clsx(
                            'flex h-[30px] w-[116px] items-center gap-[3px] border border-[#4d5056] pr-0 pl-1.5 text-left whitespace-nowrap',
                            t.active
                                ? 'bg-[radial-gradient(ellipse_at_50%_105%,#d9d4ff_0%,#4a3cb4_25%,#1c1568_50%,#0b0a2a_80%)]'
                                : 'bg-linear-to-br from-[#54575b] via-[#0a0d12] via-40% to-[#05070b]',
                        )}
                    >
                        {t.icon}
                        <span className="flex-1">{t.name}</span>
                        {t.more && <Caret className="text-white" />}
                    </button>
                ))}
            </div>
            <div className="mr-7 ml-auto h-8 w-[3px] border-x border-dotted border-[#7d8086]" />
            <div className="flex flex-col gap-1">
                <svg viewBox="0 0 16 16" className="size-3" aria-hidden="true">
                    <path d="M1 1h6v6H1z" fill="#c9ccd2" />
                    <circle cx="10" cy="10" r="5.500" fill="#2fa838" />
                    <path d="M7 10l2 3 4-5" fill="none" stroke="#fff" strokeWidth="1.500" />
                </svg>
                <svg viewBox="0 0 16 16" className="size-3" aria-hidden="true">
                    <path d="M2 5h3l5-4v14l-5-4H2z" fill="#c3c6cc" stroke="#7b7e84" />
                </svg>
            </div>
            <div className="mr-2.5 ml-2 w-10 text-center leading-[15px]">
                <div>21:43</div>
                <div>четверг</div>
            </div>
        </div>
    )
}

export default function App() {
    return (
        <div className="flex h-screen flex-col overflow-hidden bg-[#d5daea] font-[DejaVu_Sans_Condensed,Noto_Sans,sans-serif] text-[8px] leading-[11px]">
            <TitleBar />
            <Toolbars />
            <div className="flex min-h-0 flex-1">
                <FeatureBar />
                <PropertyPanel />
                <ModelView />
                <ViewPalette />
            </div>
            <StatusBar />
            <Taskbar />
        </div>
    )
}
